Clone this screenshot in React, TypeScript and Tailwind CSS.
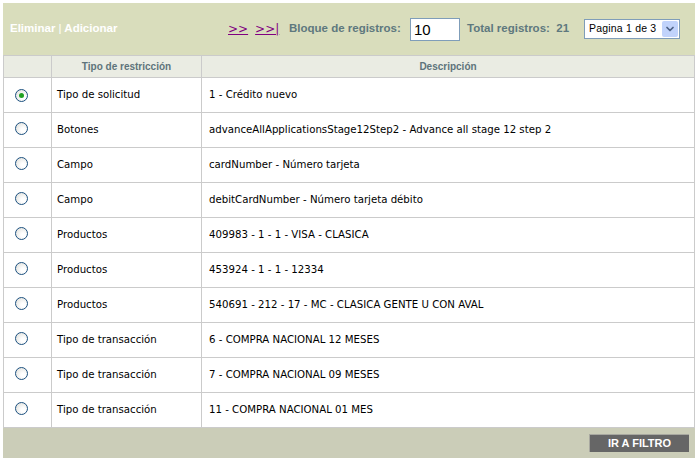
import { ChevronDown } from 'lucide-react';

interface Restriccion {
  tipo: string;
  descripcion: string;
}

const restricciones: Restriccion[] = [
  { tipo: 'Tipo de solicitud', descripcion: '1 - Crédito nuevo' },
  { tipo: 'Botones', descripcion: 'advanceAllApplicationsStage12Step2 - Advance all stage 12 step 2' },
  { tipo: 'Campo', descripcion: 'cardNumber - Número tarjeta' },
  { tipo: 'Campo', descripcion: 'debitCardNumber - Número tarjeta débito' },
  { tipo: 'Productos', descripcion: '409983 - 1 - 1 - VISA - CLASICA' },
  { tipo: 'Productos', descripcion: '453924 - 1 - 1 - 12334' },
  { tipo: 'Productos', descripcion: '540691 - 212 - 17 - MC - CLASICA GENTE U CON AVAL' },
  { tipo: 'Tipo de transacción', descripcion: '6 - COMPRA NACIONAL 12 MESES' },
  { tipo: 'Tipo de transacción', descripcion: '7 - COMPRA NACIONAL 09 MESES' },
  { tipo: 'Tipo de transacción', descripcion: '11 - COMPRA NACIONAL 01 MES' },
];

function Radio({ checked }: { checked: boolean }) {
  return (
    <span className="inline-flex h-[13px] w-[13px] items-center justify-center rounded-full border border-[#1c5180] bg-[radial-gradient(circle_at_65%_65%,#ffffff_20%,#dcdcd6_100%)]">
      {checked && <span className="h-[5px] w-[5px] rounded-full bg-[#21a121]" />}
    </span>
  );
}

function App() {
  return (
    <div className="bg-white pl-[3px] pt-[3px] font-['DejaVu_Sans',sans-serif]">
      <div className="w-[692px]">
        {/* barra superior */}
        <div className="flex h-[52px] items-center whitespace-nowrap bg-[#d9ddbc] text-[11.5px] font-bold font-['Liberation_Sans',sans-serif]">
          <div className="ml-[7px] w-[107px] shrink-0 text-white">
            Eliminar <span className="font-normal">|</span> Adicionar
          </div>
          <div className="ml-[111px] flex w-[45px] shrink-0 gap-[7px] text-[12px] font-normal text-[#800080] font-['DejaVu_Sans',sans-serif]">
            <a href="#" className="underline">&gt;&gt;</a>
            <a href="#" className="underline">&gt;&gt;|</a>
          </div>
          <span className="ml-[16px] w-[112px] shrink-0 text-[#5e787e]">Bloque de registros:</span>
          <input
            defaultValue="10"
            className="ml-[9px] h-[23px] w-[50px] shrink-0 border border-[#7f9db9] bg-white px-[3px] text-[15px] font-normal text-black outline-none"
          />
          <span className="ml-[7px] w-[103px] shrink-0 text-[#5e787e]">Total registros:&nbsp; 21</span>
          <div className="ml-[14px] flex h-[20px] w-[96px] shrink-0 items-center border border-[#7f9db9] bg-white">
            <span className="flex-1 pl-[4px] text-[10.5px] font-normal tracking-[0.2px] text-black font-['Liberation_Sans',sans-serif]">
              Pagina 1 de 3
            </span>
            <span className="mr-px flex h-[16px] w-[16px] items-center justify-center rounded-[2px] bg-[#c1d3fb]">
              <ChevronDown size={12} strokeWidth={3.5} className="text-[#4d6185]" />
            </span>
          </div>
        </div>

        {/* tabla */}
        <table className="w-full border-collapse text-[10.2px] text-black">
          <thead>
            <tr className="h-[22px] bg-[#eaece3] text-[10px] text-[#5e747b] font-['Liberation_Sans',sans-serif]">
              <th className="w-[48px] border border-[#cbcbcb]" />
              <th className="w-[150px] border border-[#cbcbcb] font-bold">Tipo de restricción</th>
              <th className="border border-[#cbcbcb] font-bold">Descripción</th>
            </tr>
          </thead>
          <tbody>
            {restricciones.map((r, i) => (
              <tr key={i} className="h-[35px]">
                <td className="border border-[#cbcbcb] pl-[11px] align-middle leading-none">
                  <Radio checked={i === 0} />
                </td>
                <td className="border border-[#cbcbcb] pl-[5px]">{r.tipo}</td>
                <td className="border border-[#cbcbcb] pl-[7px]">{r.descripcion}</td>
              </tr>
            ))}
          </tbody>
        </table>

        {/* pie */}
        <div className="flex h-[30px] items-center justify-end bg-[#cbcdb8] pr-[6px]">
          <button className="h-[18px] w-[100px] border-l border-t border-[#a8a8a0] bg-[#666666] text-[11px] font-bold text-white font-['Liberation_Sans',sans-serif]">
            IR A FILTRO
          </button>
        </div>
      </div>
    </div>
  );
}

export default App;
